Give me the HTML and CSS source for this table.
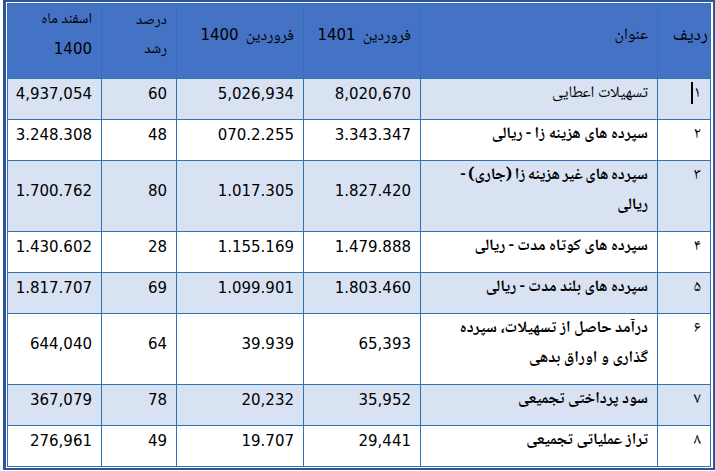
FILE: index.html
```html
<!DOCTYPE html>
<html lang="fa">
<head>
<meta charset="utf-8">
<link rel="stylesheet" href="styles.css">
</head>
<body>
<div class="frame">
<table class="grid" dir="rtl">
<colgroup>
<col class="c-idx"><col class="c-title"><col class="c-n1"><col class="c-n2"><col class="c-pct"><col class="c-n3">
</colgroup>
<thead>
<tr>
<th class="idx-h">ردیف</th>
<th>عنوان</th>
<th>فروردین&nbsp;&nbsp;<span class="lat">1401</span></th>
<th>فروردین&nbsp;&nbsp;<span class="lat">1400</span></th>
<th class="small">درصد<br>رشد</th>
<th class="small">اسفند ماه<br><span class="lat">1400</span></th>
</tr>
</thead>
<tbody>
<tr class="alt"><td class="idx">۱<span class="caret"></span></td><td class="title light">تسهیلات اعطایی</td><td class="num">8,020,670</td><td class="num">5,026,934</td><td class="num">60</td><td class="num">4,937,054</td></tr>
<tr><td class="idx">۲</td><td class="title">سپرده های هزینه زا - ریالی</td><td class="num">3.343.347</td><td class="num">070.2.255</td><td class="num">48</td><td class="num">3.248.308</td></tr>
<tr class="alt"><td class="idx top">۳</td><td class="title tight">سپرده های غیر هزینه زا (جاری) -<br>ریالی</td><td class="num">1.827.420</td><td class="num">1.017.305</td><td class="num">80</td><td class="num">1.700.762</td></tr>
<tr><td class="idx">۴</td><td class="title">سپرده های کوتاه مدت - ریالی</td><td class="num">1.479.888</td><td class="num">1.155.169</td><td class="num">28</td><td class="num">1.430.602</td></tr>
<tr class="alt"><td class="idx">۵</td><td class="title">سپرده های بلند مدت - ریالی</td><td class="num">1.803.460</td><td class="num">1.099.901</td><td class="num">69</td><td class="num">1.817.707</td></tr>
<tr><td class="idx top">۶</td><td class="title">درآمد حاصل از تسهیلات، سپرده<br>گذاری و اوراق بدهی</td><td class="num">65,393</td><td class="num">39.939</td><td class="num">64</td><td class="num">644,040</td></tr>
<tr class="alt"><td class="idx">۷</td><td class="title">سود پرداختی تجمیعی</td><td class="num">35,952</td><td class="num">20,232</td><td class="num">78</td><td class="num">367,079</td></tr>
<tr><td class="idx">۸</td><td class="title">تراز عملیاتی تجمیعی</td><td class="num">29,441</td><td class="num">19.707</td><td class="num">49</td><td class="num">276,961</td></tr>
</tbody>
</table>
</div>
</body>
</html>
```
FILE: styles.css
```css
html, body {
  margin: 0;
  padding: 0;
  background: #ffffff;
}
.frame {
  margin-left: 3px;
  width: 705px;
  border-style: solid;
  border-color: #2f5597;
  border-width: 2px 2px 2px 3px;
  padding: 1px;
  background: #ffffff;
}
.grid {
  width: 703px;
  border-collapse: collapse;
  table-layout: fixed;
  font-family: "Noto Naskh Arabic", "DejaVu Sans", sans-serif;
  color: #000;
}
.c-idx { width: 53px; }
.c-title { width: 237px; }
.c-n1 { width: 117px; }
.c-n2 { width: 127px; }
.c-pct { width: 75px; }
.c-n3 { width: 94px; }
.grid th, .grid td {
  border: 1px solid #2e74b5;
  padding: 0 9px 10px 4px;
  line-height: 30px;
  vertical-align: middle;
  text-align: right;
  overflow: hidden;
  white-space: nowrap;
}
.grid th {
  background: #4472c4;
  height: 64px;
  font-weight: normal;
  font-size: 16px;
}
.grid th.small {
  font-size: 15px;
  line-height: 29px;
}
.grid th.idx-h {
  padding-right: 2px;
  font-size: 18px;
}
.lat {
  font-family: "DejaVu Sans", sans-serif;
  font-size: 15px;
}
.grid td {
  height: 30px;
  font-size: 16px;
}
.grid tr.alt td {
  background: #d9e2f3;
}
.grid td.num {
  font-family: "DejaVu Sans", sans-serif;
  font-size: 15px;
  direction: ltr;
}
.grid td.title {
  font-weight: bold;
}
.grid td.title.light {
  font-weight: normal;
}
.grid td.title.tight {
  word-spacing: -1px;
}
.grid td.idx {
  font-size: 16px;
}
.grid td.idx.top {
  vertical-align: top;
}
.caret {
  display: inline-block;
  width: 2px;
  height: 22px;
  background: #000;
  vertical-align: middle;
  margin-right: 1px;
}
```
